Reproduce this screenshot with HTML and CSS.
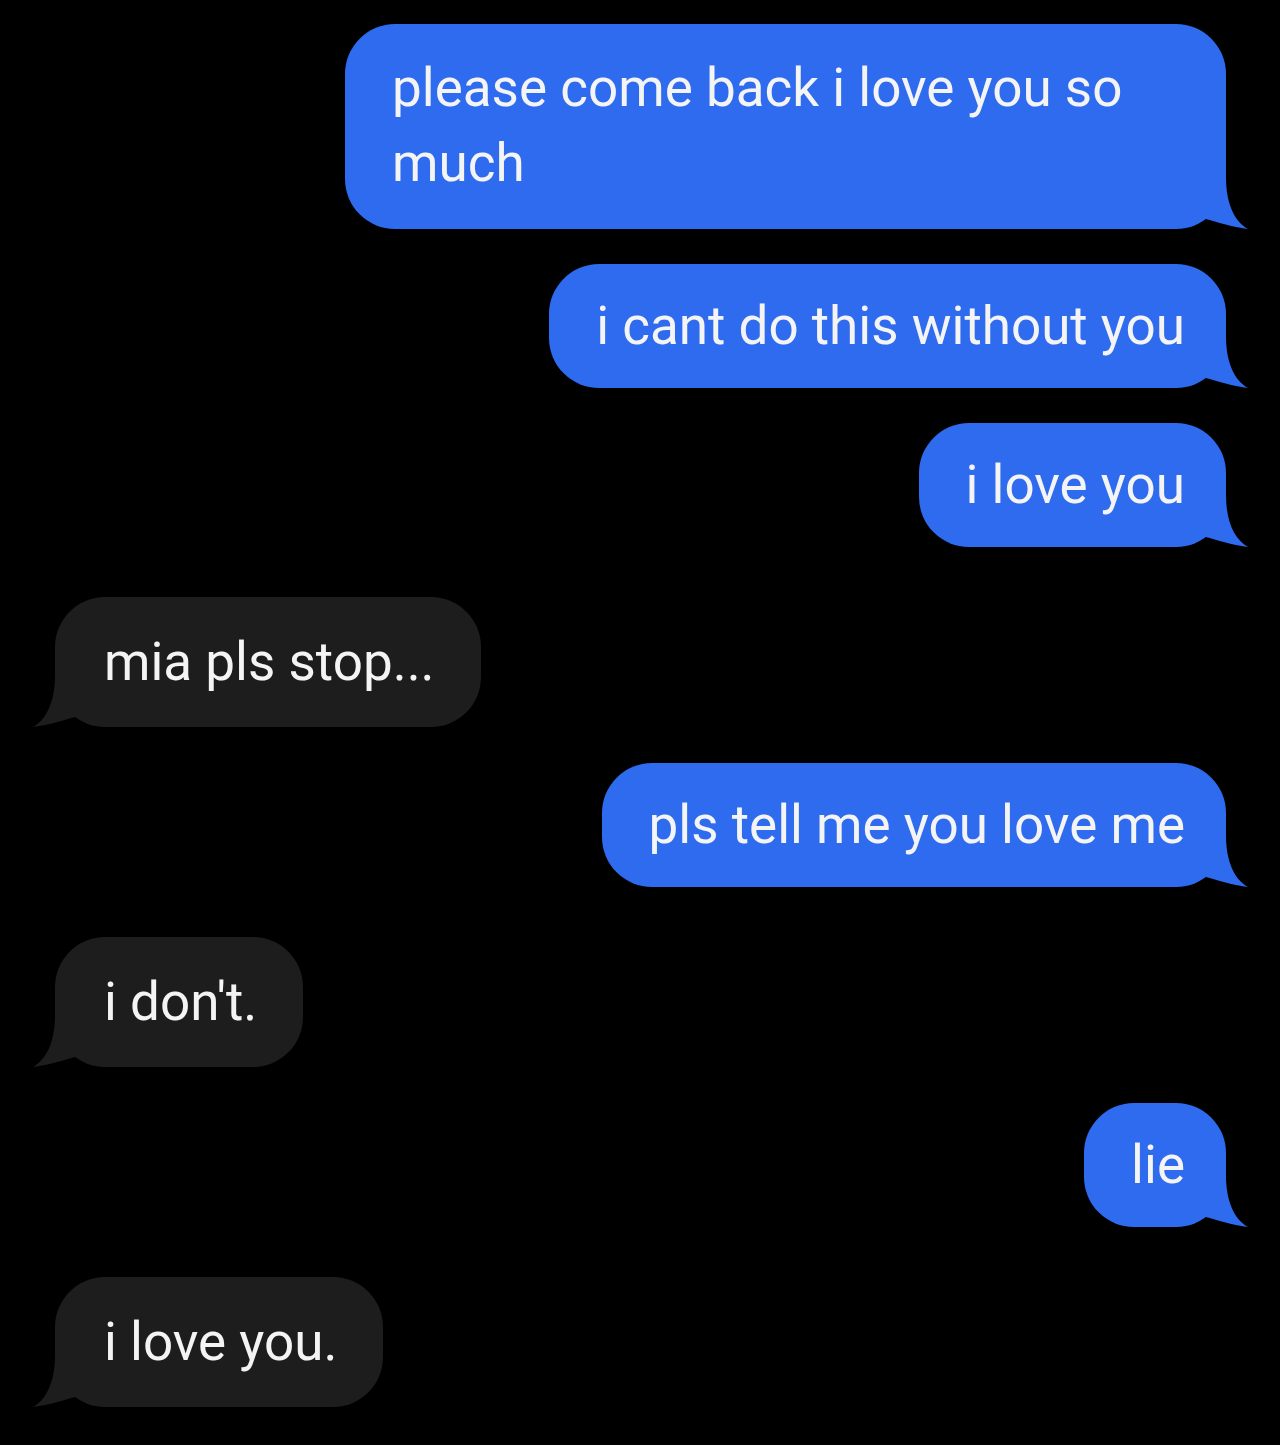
FILE: index.html
```html
<!DOCTYPE html>
<html lang="en">

<head>
    <meta charset="UTF-8">
    <meta name="viewport" content="width=device-width, initial-scale=1.0">
    <title>Messages</title>
    <link rel="stylesheet" href="styles.css">
</head>

<body>
    <div class="thread">
        <div class="msg sent">
            <div class="bubble multi">please come back i love you so much
                <svg class="tail" viewBox="0 0 66 64"><path d="M0 0 L40 0 L40 12 C40 38 48 56 62 64 C53 63 40 60 20 54 L20 50 L0 50 Z"/></svg>
            </div>
        </div>

        <div class="msg sent">
            <div class="bubble">i cant do this without you
                <svg class="tail" viewBox="0 0 66 64"><path d="M0 0 L40 0 L40 12 C40 38 48 56 62 64 C53 63 40 60 20 54 L20 50 L0 50 Z"/></svg>
            </div>
        </div>

        <div class="msg sent">
            <div class="bubble">i love you
                <svg class="tail" viewBox="0 0 66 64"><path d="M0 0 L40 0 L40 12 C40 38 48 56 62 64 C53 63 40 60 20 54 L20 50 L0 50 Z"/></svg>
            </div>
        </div>

        <div class="msg received">
            <div class="bubble">mia pls stop...
                <svg class="tail" viewBox="0 0 66 64"><path d="M0 0 L40 0 L40 12 C40 38 48 56 62 64 C53 63 40 60 20 54 L20 50 L0 50 Z"/></svg>
            </div>
        </div>

        <div class="msg sent after">
            <div class="bubble">pls tell me you love me
                <svg class="tail" viewBox="0 0 66 64"><path d="M0 0 L40 0 L40 12 C40 38 48 56 62 64 C53 63 40 60 20 54 L20 50 L0 50 Z"/></svg>
            </div>
        </div>

        <div class="msg received">
            <div class="bubble">i don't.
                <svg class="tail" viewBox="0 0 66 64"><path d="M0 0 L40 0 L40 12 C40 38 48 56 62 64 C53 63 40 60 20 54 L20 50 L0 50 Z"/></svg>
            </div>
        </div>

        <div class="msg sent after">
            <div class="bubble">lie
                <svg class="tail" viewBox="0 0 66 64"><path d="M0 0 L40 0 L40 12 C40 38 48 56 62 64 C53 63 40 60 20 54 L20 50 L0 50 Z"/></svg>
            </div>
        </div>

        <div class="msg received">
            <div class="bubble">i love you.
                <svg class="tail" viewBox="0 0 66 64"><path d="M0 0 L40 0 L40 12 C40 38 48 56 62 64 C53 63 40 60 20 54 L20 50 L0 50 Z"/></svg>
            </div>
        </div>
    </div>
</body>

</html>
```

FILE: styles.css
```css
html,
body {
    margin: 0;
    background-color: #000;
}

body {
    font-family: Roboto, "Noto Sans", sans-serif;
    color: #f4f4f4;
}

.thread {
    display: flex;
    flex-direction: column;
    gap: 35px;
    padding: 24px 54px 40px 55px;
}

.msg {
    display: flex;
}

/* a new sender gets a little more room */
.msg.received {
    margin-top: 15px;
}

.msg.after {
    margin-top: 1px;
}

.sent {
    justify-content: flex-end;
}

.received {
    justify-content: flex-start;
}

.bubble {
    position: relative;
    max-width: 793px;
    padding: 25px 41px 24px 47px;
    border-radius: 50px;
    font-size: 53px;
    line-height: 75px;
}

.bubble.multi {
    padding-top: 27px;
    padding-bottom: 28px;
}

.sent .bubble {
    background-color: #2e6bee;
}

.received .bubble {
    background-color: #1d1d1d;
    padding: 28px 46px 27px 49px;
}

.tail {
    position: absolute;
    bottom: 0;
    width: 66px;
    height: 64px;
}

.sent .tail {
    right: -26px;
    fill: #2e6bee;
}

.received .tail {
    left: -26px;
    fill: #1d1d1d;
    transform: scaleX(-1);
}
```
